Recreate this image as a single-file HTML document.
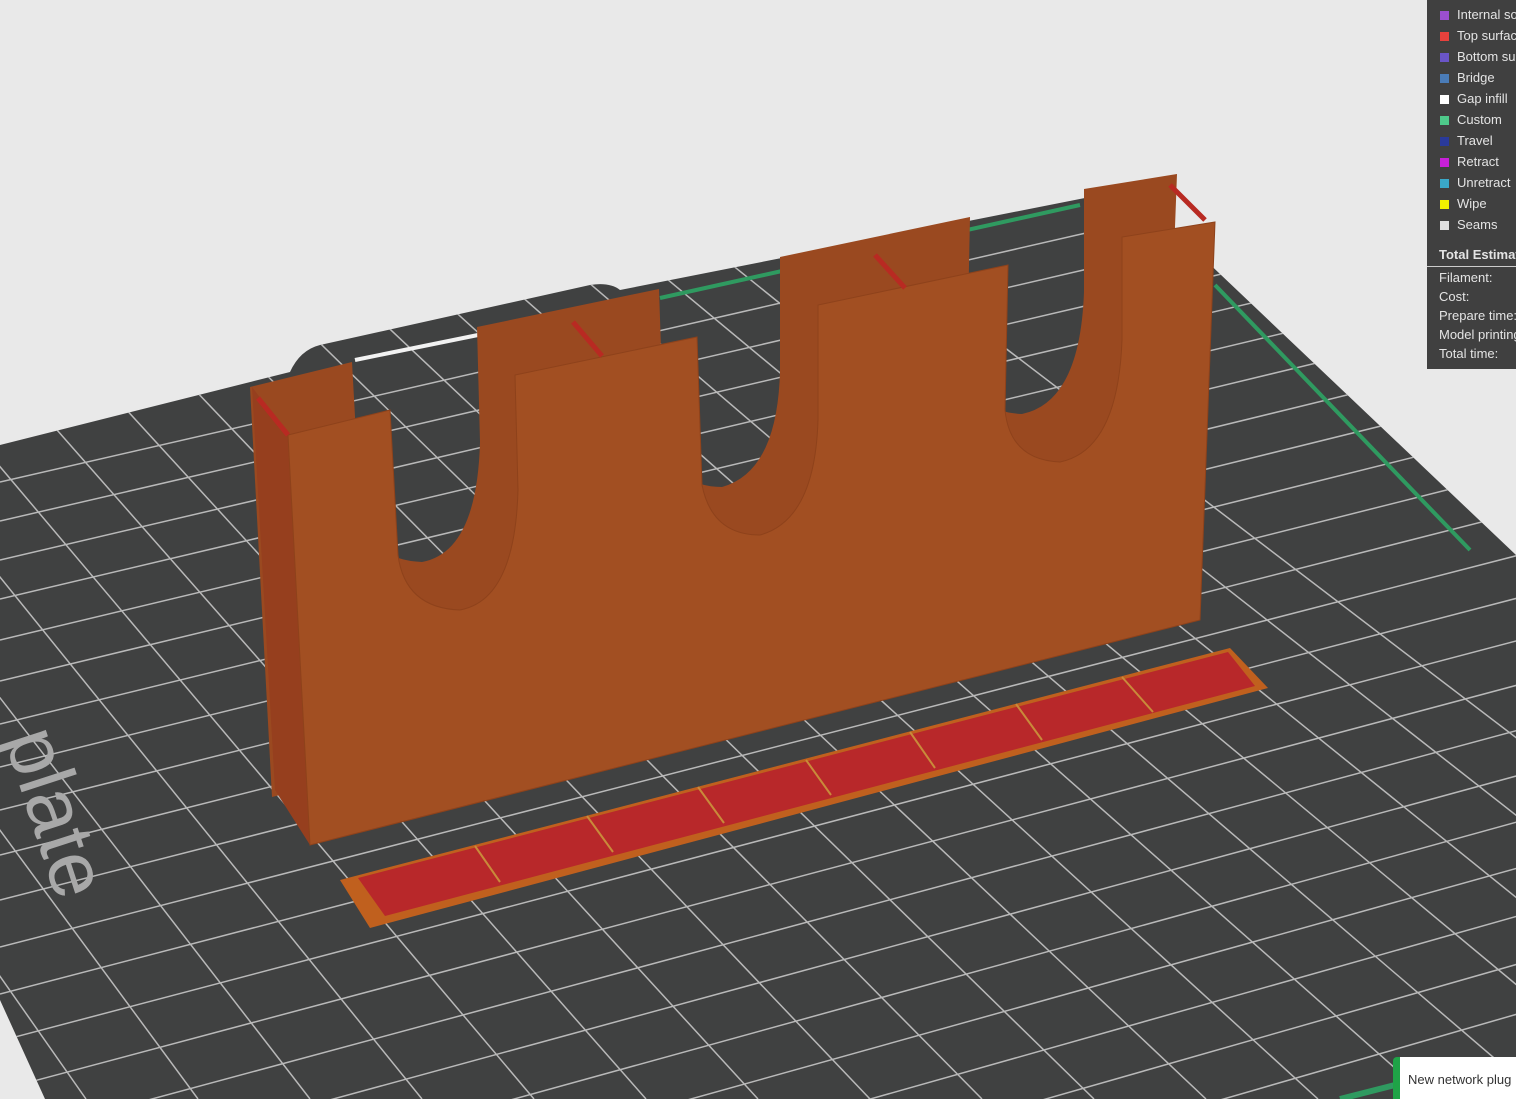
<!DOCTYPE html>
<html><head><meta charset="utf-8"><style>
body{margin:0;width:1516px;height:1099px;overflow:hidden;background:#e9e9e9;font-family:"Liberation Sans",sans-serif}
svg{position:absolute;left:0;top:0}
#leg{position:absolute;left:1427px;top:0;width:89px;height:369px;background:#404040;color:#e4e4e4;font-size:13px;overflow:hidden}
.r{position:absolute;left:30px;white-space:nowrap}
.s{position:absolute;left:13px;width:9px;height:9px}
#note{position:absolute;left:1393px;top:1057px;width:123px;height:42px;background:#fff;border-left:7px solid #1fa347;border-radius:4px 0 0 0;box-sizing:border-box;overflow:hidden}
</style></head><body>
<svg width="1516" height="1099" viewBox="0 0 1516 1099">
<defs><clipPath id="pl"><path d="M0,445 L290,372 Q300,350 320,345 L590,285 Q610,282 620,290 L1100,195 L1200,255 L1516,555 L1516,1099 L45,1099 L0,1000Z"/></clipPath></defs>
<path d="M0,445 L290,372 Q300,350 320,345 L590,285 Q610,282 620,290 L1100,195 L1200,255 L1516,555 L1516,1099 L45,1099 L0,1000Z" fill="#404141"/>
<g clip-path="url(#pl)" stroke="#b9b9b9" stroke-width="1.5">
<line x1="-2100" y1="-2020" x2="-250" y2="1099"/><line x1="-2100" y1="-2020" x2="-138" y2="1099"/><line x1="-2100" y1="-2020" x2="-26" y2="1099"/><line x1="-2100" y1="-2020" x2="86" y2="1099"/><line x1="-2100" y1="-2020" x2="198" y2="1099"/><line x1="-2100" y1="-2020" x2="310" y2="1099"/><line x1="-2100" y1="-2020" x2="422" y2="1099"/><line x1="-2100" y1="-2020" x2="534" y2="1099"/><line x1="-2100" y1="-2020" x2="646" y2="1099"/><line x1="-2100" y1="-2020" x2="758" y2="1099"/><line x1="-2100" y1="-2020" x2="870" y2="1099"/><line x1="-2100" y1="-2020" x2="982" y2="1099"/><line x1="-2100" y1="-2020" x2="1094" y2="1099"/><line x1="-2100" y1="-2020" x2="1206" y2="1099"/><line x1="-2100" y1="-2020" x2="1318" y2="1099"/><line x1="-2100" y1="-2020" x2="1430" y2="1099"/><line x1="-2100" y1="-2020" x2="1542" y2="1099"/><line x1="-2100" y1="-2020" x2="1654" y2="1099"/><line x1="-2100" y1="-2020" x2="1766" y2="1099"/><line x1="-2100" y1="-2020" x2="1878" y2="1099"/><line x1="-2100" y1="-2020" x2="1990" y2="1099"/>
<line x1="16180" y1="-3228" x2="0" y2="482"/><line x1="16180" y1="-3228" x2="0" y2="521"/><line x1="16180" y1="-3228" x2="0" y2="560"/><line x1="16180" y1="-3228" x2="0" y2="599"/><line x1="16180" y1="-3228" x2="0" y2="640"/><line x1="16180" y1="-3228" x2="0" y2="681"/><line x1="16180" y1="-3228" x2="0" y2="724"/><line x1="16180" y1="-3228" x2="0" y2="767"/><line x1="16180" y1="-3228" x2="0" y2="810"/><line x1="16180" y1="-3228" x2="0" y2="855"/><line x1="16180" y1="-3228" x2="0" y2="900"/><line x1="16180" y1="-3228" x2="0" y2="947"/><line x1="16180" y1="-3228" x2="0" y2="994"/><line x1="16180" y1="-3228" x2="0" y2="1041"/><line x1="16180" y1="-3228" x2="0" y2="1090"/><line x1="16180" y1="-3228" x2="0" y2="1140"/><line x1="16180" y1="-3228" x2="0" y2="1190"/><line x1="16180" y1="-3228" x2="0" y2="1241"/><line x1="16180" y1="-3228" x2="0" y2="1292"/><line x1="16180" y1="-3228" x2="0" y2="1345"/><line x1="16180" y1="-3228" x2="0" y2="1398"/><line x1="16180" y1="-3228" x2="0" y2="1453"/><line x1="16180" y1="-3228" x2="0" y2="1508"/>
</g>
<line x1="660" y1="298" x2="1080" y2="205" stroke="#2f9a60" stroke-width="4"/>
<line x1="1215" y1="285" x2="1470" y2="550" stroke="#2f9a60" stroke-width="4"/>
<line x1="1340" y1="1099" x2="1395" y2="1085" stroke="#2f9a60" stroke-width="6"/>
<line x1="355" y1="360" x2="478" y2="335" stroke="#f2f2f2" stroke-width="4"/>
<text x="0" y="0" transform="translate(4,738) rotate(72)" font-size="80" fill="#a8a8a8" font-family="Liberation Sans">plate</text>
<path transform="translate(-38,-48)" d="M288,435 L390,410 L398,555 Q405,608 460,610 Q515,600 518,490 L515,375 L697,337 L702,485 Q712,535 760,535 Q815,520 818,420 L818,305 L1008,265 L1005,410 Q1010,460 1060,462 Q1118,450 1122,340 L1122,237 L1215,222 L1200,620 L310,845 Z" fill="#9a4920"/>
<path d="M252,387 L288,435 L310,845 L275,790Z" fill="#963f1e"/>
<path d="M288,435 L390,410 L398,555 Q405,608 460,610 Q515,600 518,490 L515,375 L697,337 L702,485 Q712,535 760,535 Q815,520 818,420 L818,305 L1008,265 L1005,410 Q1010,460 1060,462 Q1118,450 1122,340 L1122,237 L1215,222 L1200,620 L310,845 Z" fill="#a24f22" stroke="#8e421b" stroke-width="1"/>
<line x1="258" y1="398" x2="288" y2="435" stroke="#b82a22" stroke-width="5"/>
<line x1="573" y1="322" x2="602" y2="356" stroke="#b82a22" stroke-width="5"/>
<line x1="875" y1="255" x2="905" y2="288" stroke="#b82a22" stroke-width="5"/>
<line x1="1170" y1="185" x2="1205" y2="220" stroke="#b82a22" stroke-width="5"/>
<path d="M340,880 L1230,648 L1268,688 L370,928Z" fill="#c0601e"/>
<path d="M358,878 L1228,652 L1255,686 L385,916Z" fill="#b8282a"/>
<g stroke="#c98a3a" stroke-width="2">
<line x1="475" y1="846" x2="500" y2="882"/><line x1="587" y1="816" x2="613" y2="852"/><line x1="698" y1="787" x2="724" y2="823"/><line x1="806" y1="760" x2="831" y2="795"/><line x1="910" y1="732" x2="935" y2="768"/><line x1="1016" y1="704" x2="1042" y2="740"/><line x1="1122" y1="677" x2="1153" y2="712"/>
</g>
</svg>
<div id="leg">
<div class="s" style="top:11px;background:#9b4fd0"></div><div class="r" style="top:7px">Internal solid</div>
<div class="s" style="top:32px;background:#e8413c"></div><div class="r" style="top:28px">Top surface</div>
<div class="s" style="top:53px;background:#6a55c8"></div><div class="r" style="top:49px">Bottom surface</div>
<div class="s" style="top:74px;background:#4a7cb8"></div><div class="r" style="top:70px">Bridge</div>
<div class="s" style="top:95px;background:#fff"></div><div class="r" style="top:91px">Gap infill</div>
<div class="s" style="top:116px;background:#4ec98a"></div><div class="r" style="top:112px">Custom</div>
<div class="s" style="top:137px;background:#2a3a9a"></div><div class="r" style="top:133px">Travel</div>
<div class="s" style="top:158px;background:#c820d8"></div><div class="r" style="top:154px">Retract</div>
<div class="s" style="top:179px;background:#3aa8c8"></div><div class="r" style="top:175px">Unretract</div>
<div class="s" style="top:200px;background:#f0f000"></div><div class="r" style="top:196px">Wipe</div>
<div class="s" style="top:221px;background:#e0e0e0"></div><div class="r" style="top:217px">Seams</div>
<div class="r" style="top:247px;left:12px;font-weight:bold">Total Estimation</div>
<div style="position:absolute;left:0;top:266px;width:89px;height:1px;background:#ccc"></div>
<div class="r" style="top:270px;left:12px">Filament:</div>
<div class="r" style="top:289px;left:12px">Cost:</div>
<div class="r" style="top:308px;left:12px">Prepare time:</div>
<div class="r" style="top:327px;left:12px">Model printing</div>
<div class="r" style="top:346px;left:12px">Total time:</div>
</div>
<div id="note"><div style="position:absolute;left:8px;top:15px;font-size:13px;color:#333;white-space:nowrap">New network plug</div></div>
</body></html>
